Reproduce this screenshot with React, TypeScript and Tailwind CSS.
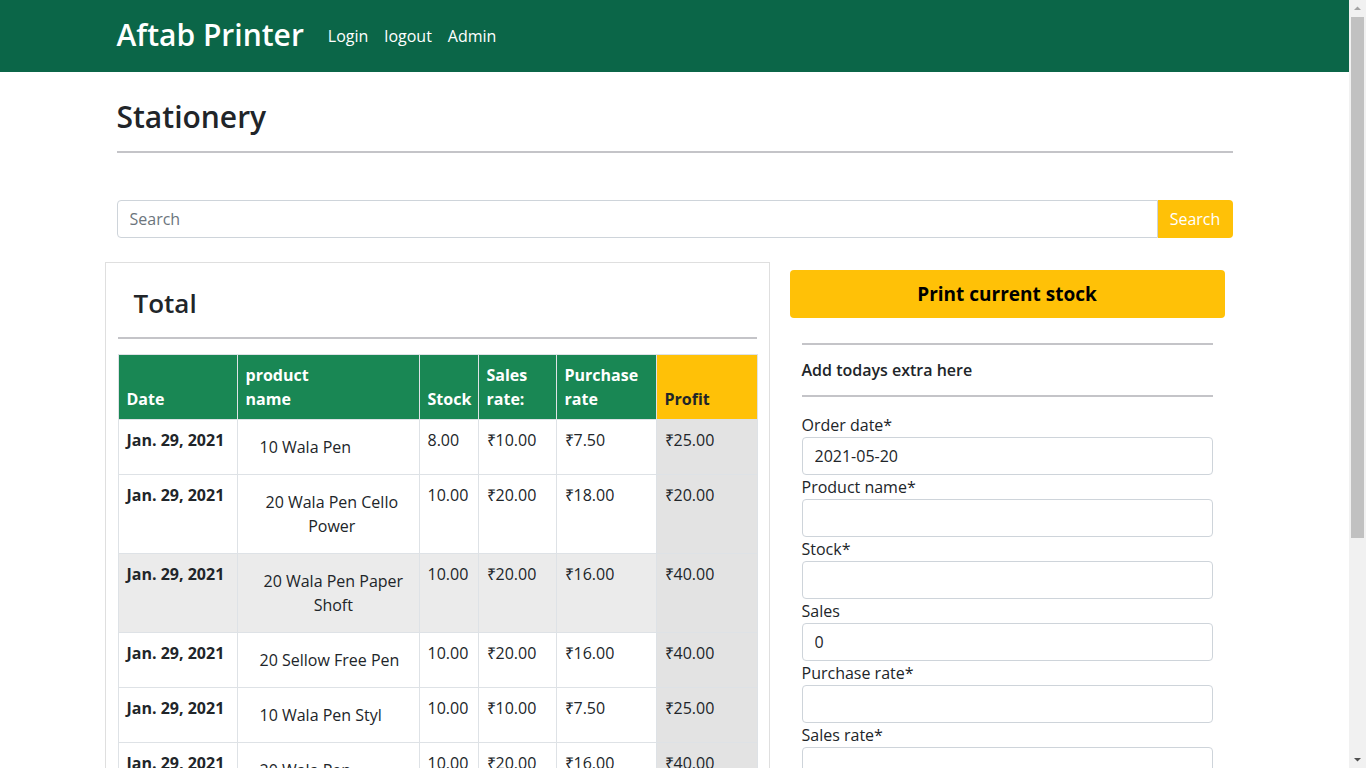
import React from "react";

type Row = {
    date: string;
    name: string[];
    nameOffset: number;
    stock: string;
    sales: string;
    purchase: string;
    profit: string;
    striped?: boolean;
};

const rows: Row[] = [
    { date: "Jan. 29, 2021", name: ["10 Wala Pen"], nameOffset: 14, stock: "8.00", sales: "₹10.00", purchase: "₹7.50", profit: "₹25.00" },
    { date: "Jan. 29, 2021", name: ["20 Wala Pen Cello", "Power"], nameOffset: 20, stock: "10.00", sales: "₹20.00", purchase: "₹18.00", profit: "₹20.00" },
    { date: "Jan. 29, 2021", name: ["20 Wala Pen Paper", "Shoft"], nameOffset: 18, stock: "10.00", sales: "₹20.00", purchase: "₹16.00", profit: "₹40.00", striped: true },
    { date: "Jan. 29, 2021", name: ["20 Sellow Free Pen"], nameOffset: 14, stock: "10.00", sales: "₹20.00", purchase: "₹16.00", profit: "₹40.00" },
    { date: "Jan. 29, 2021", name: ["10 Wala Pen Styl"], nameOffset: 14, stock: "10.00", sales: "₹10.00", purchase: "₹7.50", profit: "₹25.00" },
    { date: "Jan. 29, 2021", name: ["20 Wala Pen"], nameOffset: 14, stock: "10.00", sales: "₹20.00", purchase: "₹16.00", profit: "₹40.00" },
    { date: "Jan. 29, 2021", name: ["5 Wala Pen"], nameOffset: 14, stock: "12.00", sales: "₹5.00", purchase: "₹3.50", profit: "₹18.00" },
    { date: "Jan. 29, 2021", name: ["A4 Paper Rim"], nameOffset: 14, stock: "4.00", sales: "₹250.00", purchase: "₹220.00", profit: "₹120.00" },
];

const fields = [
    { label: "Order date*", value: "2021-05-20" },
    { label: "Product name*", value: "" },
    { label: "Stock*", value: "" },
    { label: "Sales", value: "0" },
    { label: "Purchase rate*", value: "" },
    { label: "Sales rate*", value: "" },
    { label: "Profit", value: "" },
];

// mimics the browser's classic scrollbar seen in the screenshot
const ScrollBar = () => (
    <div className="sticky top-0 h-screen w-[17px] shrink-0 bg-[#f1f1f1] flex flex-col items-center">
        <svg width="17" height="17" viewBox="0 0 17 17" className="shrink-0">
            <path d="M5 10 L8.5 6.5 L12 10 Z" fill="#a3a3a3" />
        </svg>
        <div className="w-[13px] h-[521px] bg-[#c1c1c1]" />
        <div className="flex-1" />
        <svg width="17" height="17" viewBox="0 0 17 17" className="shrink-0">
            <path d="M5 7 L8.5 10.5 L12 7 Z" fill="#505050" />
        </svg>
    </div>
);

const App = () => {
    return (
        <div className="flex min-h-screen bg-white text-[#212529] font-['Segoe_UI','Open_Sans',sans-serif] text-[16px] leading-6">
            <div className="flex-1 min-w-0">
                <nav className="bg-[#0b6648] h-[72px]">
                    <div className="max-w-[1140px] mx-auto px-3 h-full flex items-center">
                        <a className="text-white text-[30px] font-semibold leading-none mr-6 pb-[2px]">Aftab Printer</a>
                        <div className="flex items-center gap-4 text-white text-[16px]">
                            <a>Login</a>
                            <a>logout</a>
                            <a>Admin</a>
                        </div>
                    </div>
                </nav>

                <div className="max-w-[1140px] mx-auto px-3">
                    <h1 className="text-[30px] font-semibold leading-[1.2] mt-[27px] mb-[16px]">Stationery</h1>
                    <hr className="border-0 h-[2px] bg-[#c4c4c8]" />

                    <div className="flex mt-[47px]">
                        <input
                            className="flex-1 h-[38px] border border-[#ced4da] rounded-l-[4px] px-3 text-[16px] placeholder:text-[#6c757d] outline-none"
                            placeholder="Search"
                        />
                        <button className="h-[38px] w-[75px] bg-[#ffc107] text-white rounded-r-[4px] text-[16px]">Search</button>
                    </div>

                    <div className="flex -mx-3 mt-[24px] items-start">
                        <div className="w-[665px] border border-[#dfdfdf] px-3 pb-6">
                            <h2 className="text-[26px] font-semibold leading-[1.2] pl-4 pt-[25px] pb-[18px]">Total</h2>
                            <hr className="border-0 h-[2px] bg-[#c4c4c8] mb-[15px]" />
                            <table className="w-[639px] border-collapse table-fixed">
                                <colgroup>
                                    <col className="w-[119px]" />
                                    <col className="w-[182px]" />
                                    <col className="w-[59px]" />
                                    <col className="w-[78px]" />
                                    <col className="w-[100px]" />
                                    <col className="w-[101px]" />
                                </colgroup>
                                <thead>
                                    <tr className="text-left align-bottom font-bold">
                                        <th className="bg-[#198754] text-white p-2 border border-[#dee2e6]">Date</th>
                                        <th className="bg-[#198754] text-white p-2 border border-[#dee2e6]">product<br />name</th>
                                        <th className="bg-[#198754] text-white p-2 border border-[#dee2e6]">Stock</th>
                                        <th className="bg-[#198754] text-white p-2 border border-[#dee2e6]">Sales<br />rate:</th>
                                        <th className="bg-[#198754] text-white p-2 border border-[#dee2e6]">Purchase<br />rate</th>
                                        <th className="bg-[#ffc107] text-[#212529] p-2 border border-[#dee2e6]">Profit</th>
                                    </tr>
                                </thead>
                                <tbody>
                                    {rows.map((row, idx) => (
                                        <tr key={idx} className={`align-top ${row.striped ? "bg-[#ebebeb]" : "bg-white"}`}>
                                            <td className="p-2 border border-[#dee2e6] font-bold whitespace-nowrap">{row.date}</td>
                                            <td className="p-2 border border-[#dee2e6]">
                                                <div
                                                    className="inline-flex flex-col items-center pt-[7px] pb-[7px]"
                                                    style={{ marginLeft: row.nameOffset }}
                                                >
                                                    {row.name.map((line, i) => (
                                                        <span key={i} className="whitespace-nowrap">{line}</span>
                                                    ))}
                                                </div>
                                            </td>
                                            <td className="p-2 border border-[#dee2e6]">{row.stock}</td>
                                            <td className="p-2 border border-[#dee2e6]">{row.sales}</td>
                                            <td className="p-2 border border-[#dee2e6]">{row.purchase}</td>
                                            <td className="p-2 border border-[#dee2e6] bg-[#e3e3e3]">{row.profit}</td>
                                        </tr>
                                    ))}
                                </tbody>
                            </table>
                        </div>

                        <div className="w-[475px] ml-[20px] pr-[20px]">
                            <button className="w-full h-[48px] mt-2 bg-[#ffc107] rounded-[4px] text-[19px] font-bold text-black">
                                Print current stock
                            </button>
                            <div className="px-3 mt-[25px]">
                                <hr className="border-0 h-[2px] bg-[#c4c4c8]" />
                                <p className="font-semibold py-[13px]">Add todays extra here</p>
                                <hr className="border-0 h-[2px] bg-[#c4c4c8] mb-[16px]" />
                                {fields.map((f, idx) => (
                                    <div key={idx}>
                                        <label className="block">{f.label}</label>
                                        <input
                                            defaultValue={f.value}
                                            className="w-full h-[38px] border border-[#ced4da] rounded-[4px] px-3 text-[16px] outline-none"
                                        />
                                    </div>
                                ))}
                                <button className="mt-4 mb-10 px-3 h-[38px] bg-[#198754] text-white rounded-[4px]">Submit</button>
                            </div>
                        </div>
                    </div>
                </div>
            </div>
            <ScrollBar />
        </div>
    );
};

export default App;
